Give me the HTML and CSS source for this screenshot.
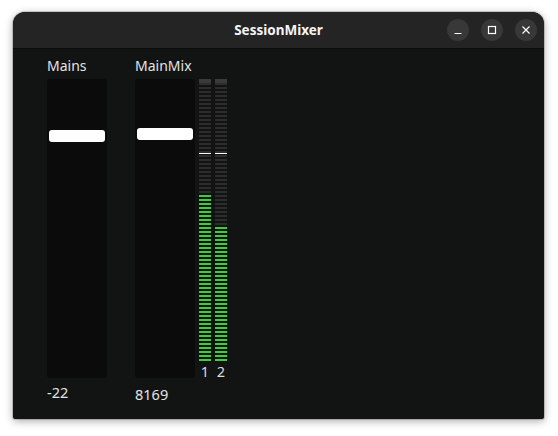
FILE: index.html
```html
<!DOCTYPE html>
<html>
<head>
<meta charset="utf-8">
<link rel="stylesheet" href="styles.css">
</head>
<body>
<div class="window">
  <div class="titlebar">
    <div class="title">SessionMixer</div>
    <div class="controls">
      <div class="ctl"><svg width="10" height="10" viewBox="0 0 10 10"><path d="M1.5 8.5h7" stroke="#fff" stroke-width="1.2"/></svg></div>
      <div class="ctl"><svg width="10" height="10" viewBox="0 0 10 10"><rect x="1.5" y="1.5" width="7" height="7" fill="none" stroke="#fff" stroke-width="1.2"/></svg></div>
      <div class="ctl"><svg width="10" height="10" viewBox="0 0 10 10"><path d="M1.5 1.5l7 7M8.5 1.5l-7 7" stroke="#fff" stroke-width="1.2"/></svg></div>
    </div>
  </div>
  <div class="content">
    <div class="strip">
      <div class="label">Mains</div>
      <div class="body">
        <div class="trough"><div class="handle" style="top:51px"></div></div>
      </div>
      <div class="value">-22</div>
    </div>
    <div class="strip strip-main">
      <div class="label">MainMix</div>
      <div class="body">
        <div class="trough"><div class="handle" style="top:49px"></div></div>
        <div class="meters">
          <div class="meter-col">
            <div class="meter"><div class="cap"></div><div class="peak" style="top:74px"></div><div class="fill" style="height:166px"></div></div>
            <div class="chan">1</div>
          </div>
          <div class="meter-col">
            <div class="meter"><div class="cap"></div><div class="peak" style="top:74px"></div><div class="fill" style="height:134px"></div></div>
            <div class="chan">2</div>
          </div>
        </div>
      </div>
      <div class="value">8169</div>
    </div>
  </div>
</div>
</body>
</html>
```
FILE: styles.css
```css
html, body {
  margin: 0;
  padding: 0;
  background: #ffffff;
}
body {
  width: 558px;
  height: 436px;
  overflow: hidden;
  font-family: "Noto Sans", "DejaVu Sans", sans-serif;
}
.window {
  margin: 12px 0 0 13px;
  width: 531px;
  height: 407px;
  border-radius: 12px 12px 2px 2px;
  background: #121313;
  box-shadow: 0 2px 8px rgba(0,0,0,0.35), 0 0 0 1px rgba(0,0,0,0.15);
  overflow: hidden;
  display: flex;
  flex-direction: column;
}
.titlebar {
  height: 36px;
  background: #242424;
  border-bottom: 1px solid #0c0c0c;
  display: flex;
  align-items: center;
  justify-content: center;
  position: relative;
  flex: none;
}
.title {
  color: #f4f4f4;
  font-weight: bold;
  font-size: 13.5px;
}
.controls {
  position: absolute;
  right: 7px;
  top: 7px;
  display: flex;
  gap: 12px;
}
.ctl {
  width: 22px;
  height: 22px;
  border-radius: 50%;
  background: #383838;
  display: flex;
  align-items: center;
  justify-content: center;
}
.ctl svg { display: block; }
.content {
  flex: 1;
  display: flex;
  padding: 7px 0 0 34px;
  gap: 28px;
}
.strip {
  display: flex;
  flex-direction: column;
}
.label, .value {
  color: #e4e4e4;
  font-size: 14px;
  line-height: 19px;
  height: 23px;
}
.value {
  margin-top: 5px;
  font-size: 14.5px;
}
.body {
  display: flex;
  gap: 4px;
}
.trough {
  width: 60px;
  height: 299px;
  background: #0a0b0a;
  border-radius: 3px;
  position: relative;
}
.handle {
  position: absolute;
  left: 2px;
  width: 56px;
  height: 12px;
  background: #ffffff;
  border-radius: 3px;
}
.meters {
  display: flex;
  gap: 4px;
}
.meter-col {
  display: flex;
  flex-direction: column;
  align-items: center;
}
.meter {
  width: 12px;
  height: 282px;
  position: relative;
  background: repeating-linear-gradient(to top, #2d2d2d 0 2px, transparent 2px 4px);
}
.cap {
  position: absolute;
  top: 0;
  left: 0;
  right: 0;
  height: 4px;
  background: #3a3a3a;
}
.peak {
  position: absolute;
  left: 0;
  right: 0;
  height: 1px;
  background: #ffffff;
}
.fill {
  position: absolute;
  left: 0;
  right: 0;
  bottom: 0;
  background: repeating-linear-gradient(to top, #3ccf3c 0 2px, transparent 2px 4px);
}
.chan {
  color: #dcdcdc;
  font-size: 14.5px;
  line-height: 17px;
  margin-top: 2px;
}
```
